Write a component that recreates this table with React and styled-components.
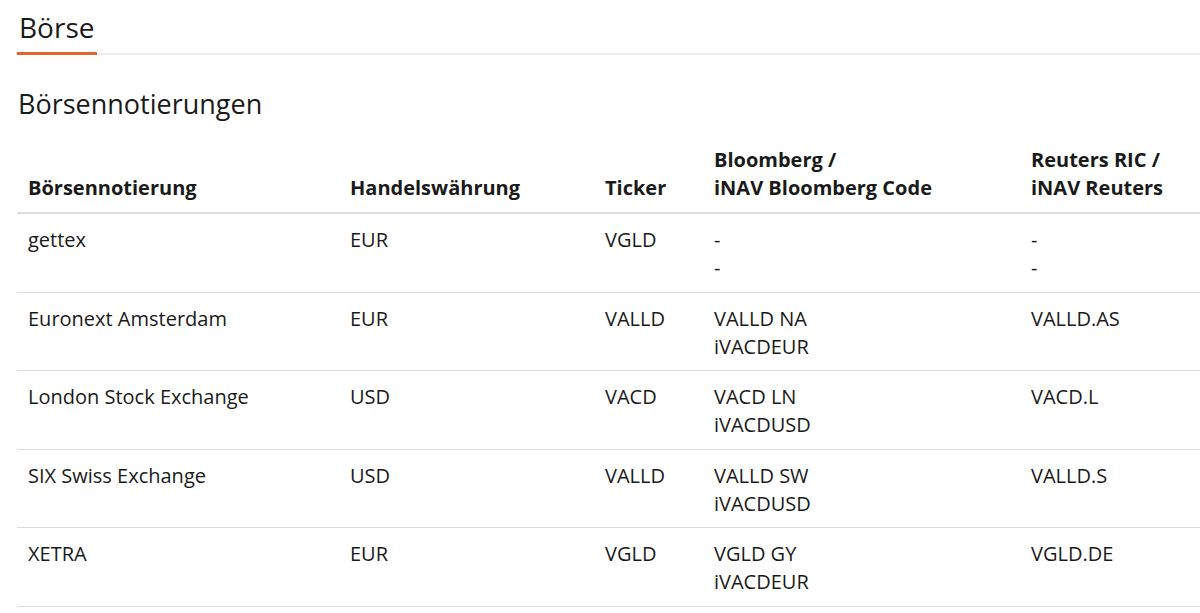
import React from 'react';
import styled, { createGlobalStyle } from 'styled-components';

const GlobalStyle = createGlobalStyle`
  body {
    margin: 0;
    background: #ffffff;
    font-family: "Open Sans", "Liberation Sans", sans-serif;
    color: #1a1a1a;
  }
`;

const Page = styled.div`
  padding: 0 0 0 17px;
`;

const TabBar = styled.div`
  display: flex;
  border-bottom: 2px solid #eeeeee;
`;

const Tab = styled.h2`
  margin: 0 0 -2px 0;
  padding: 9px 3px 7px 2px;
  font-size: 28px;
  font-weight: 400;
  line-height: 36px;
  border-bottom: 3px solid #e8642c;
`;

const SectionTitle = styled.h3`
  margin: 32px 0 0 1px;
  font-size: 27px;
  font-weight: 400;
  line-height: 34px;
`;

const Table = styled.table`
  width: 100%;
  margin-top: 25px;
  border-collapse: collapse;
  table-layout: fixed;
  font-size: 20px;
  line-height: 28px;
`;

const HeadCell = styled.th`
  box-sizing: border-box;
  text-align: left;
  vertical-align: bottom;
  font-weight: 700;
  padding: 0 8px 10px 11px;
  border-bottom: 2px solid #dcdcdc;
  width: ${p => p.$w || 'auto'};
`;

const Row = styled.tr`
  border-bottom: 1px solid #dcdcdc;
`;

const Cell = styled.td`
  vertical-align: top;
  padding: 12px 8px 9.6px 11px;
`;

const Line = styled.div`
  white-space: nowrap;
`;

const columns = [
  { label: ['Börsennotierung'], w: '322px' },
  { label: ['Handelswährung'], w: '255px' },
  { label: ['Ticker'], w: '109px' },
  { label: ['Bloomberg /', 'iNAV Bloomberg Code'], w: '317px' },
  { label: ['Reuters RIC /', 'iNAV Reuters'] },
];

const rows = [
  ['gettex', 'EUR', 'VGLD', ['-', '-'], ['-', '-']],
  ['Euronext Amsterdam', 'EUR', 'VALLD', ['VALLD NA', 'iVACDEUR'], ['VALLD.AS']],
  ['London Stock Exchange', 'USD', 'VACD', ['VACD LN', 'iVACDUSD'], ['VACD.L']],
  ['SIX Swiss Exchange', 'USD', 'VALLD', ['VALLD SW', 'iVACDUSD'], ['VALLD.S']],
  ['XETRA', 'EUR', 'VGLD', ['VGLD GY', 'iVACDEUR'], ['VGLD.DE']],
];

export default function App() {
  return (
    <>
      <GlobalStyle />
      <Page>
        <TabBar>
          <Tab>Börse</Tab>
        </TabBar>
        <SectionTitle>Börsennotierungen</SectionTitle>
        <Table>
          <thead>
            <tr>
              {columns.map((c, i) => (
                <HeadCell key={i} $w={c.w}>
                  {c.label.map((l, j) => <Line key={j}>{l}</Line>)}
                </HeadCell>
              ))}
            </tr>
          </thead>
          <tbody>
            {rows.map((r, i) => (
              <Row key={i}>
                {r.map((v, j) => (
                  <Cell key={j}>
                    {Array.isArray(v)
                      ? v.map((l, k) => <Line key={k}>{l}</Line>)
                      : <Line>{v}</Line>}
                    {(!Array.isArray(v) || v.length < 2) && <Line>&nbsp;</Line>}
                  </Cell>
                ))}
              </Row>
            ))}
          </tbody>
        </Table>
      </Page>
    </>
  );
}
